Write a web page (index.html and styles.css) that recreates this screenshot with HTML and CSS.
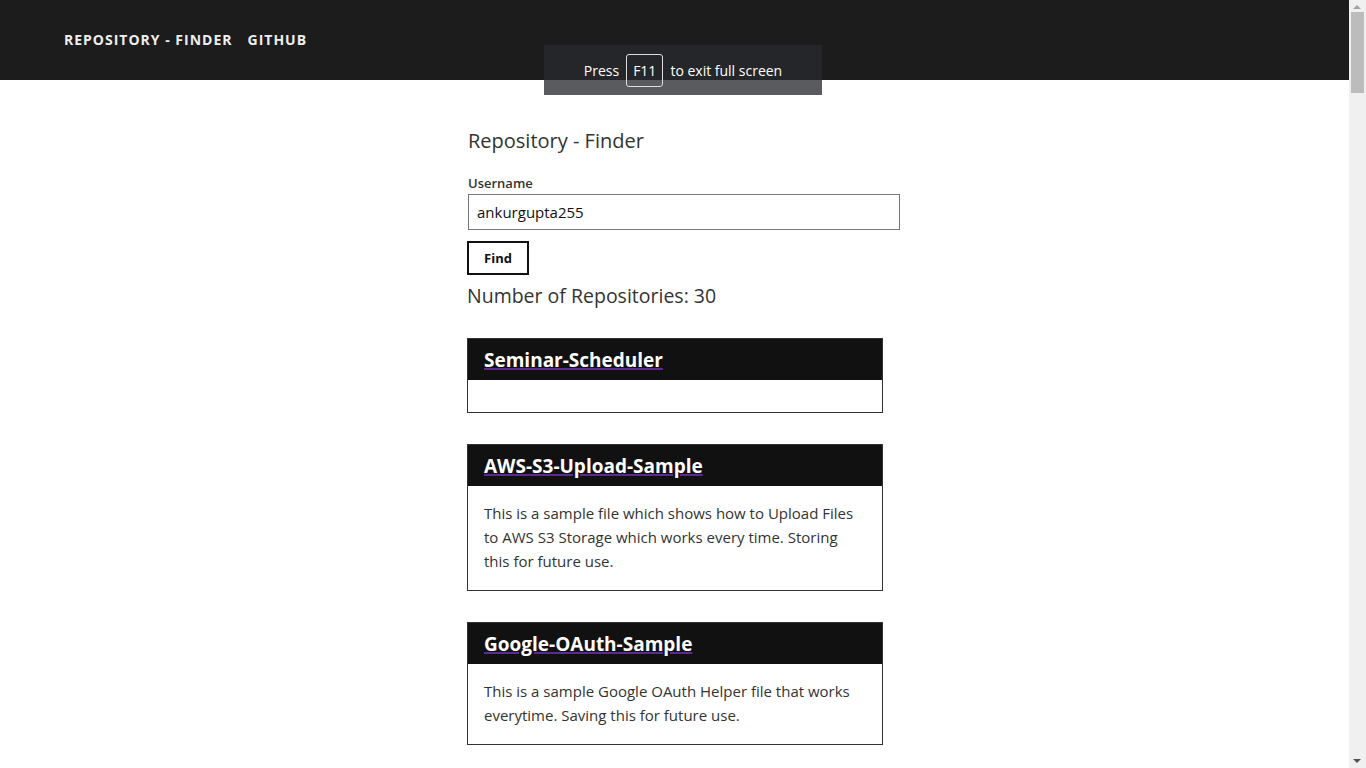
FILE: index.html
```html
<!DOCTYPE html>
<html lang="en">
<head>
  <meta charset="UTF-8" />
  <meta name="viewport" content="width=device-width, initial-scale=1.0"/>
  <title>Repository - Finder</title>
  <link rel="stylesheet" href="styles.css">
</head>
<body>

<nav class="topbar">
  <a href="#" class="brand">Repository - Finder</a>
  <a href="#" class="nav-link">Github</a>
</nav>

<div class="fs-notice">Press <span class="key">F11</span> to exit full screen</div>

<div class="scrollbar">
  <span class="arrow up"></span>
  <span class="thumb"></span>
  <span class="arrow down"></span>
</div>

<div class="main">
  <h2 class="title">Repository - Finder</h2>

  <label for="username">Username</label>
  <input type="text" id="username" value="ankurgupta255">

  <button class="find-btn">Find</button>

  <h3 class="count">Number of Repositories: 30</h3>

  <div class="repo">
    <div class="repo-head"><a href="#">Seminar-Scheduler</a></div>
    <div class="repo-body"></div>
  </div>

  <div class="repo">
    <div class="repo-head"><a href="#">AWS-S3-Upload-Sample</a></div>
    <div class="repo-body">This is a sample file which shows how to Upload Files to AWS S3 Storage which works every time. Storing this for future use.</div>
  </div>

  <div class="repo">
    <div class="repo-head"><a href="#">Google-OAuth-Sample</a></div>
    <div class="repo-body">This is a sample Google OAuth Helper file that works everytime. Saving this for future use.</div>
  </div>
</div>

</body>
</html>
```

FILE: styles.css
```css
body {
  margin: 0;
  padding-right: 17px;
  font-family: "Open Sans", "Noto Sans", sans-serif;
  color: #333;
  background: #fff;
}
.topbar {
  height: 80px;
  background: #1c1c1c;
  display: flex;
  align-items: center;
  padding-left: 64px;
  padding-bottom: 1px;
  box-sizing: border-box;
  gap: 15px;
}
.topbar a {
  color: #eee;
  text-decoration: none;
  text-transform: uppercase;
  font-weight: bold;
  font-size: 14px;
  letter-spacing: 1px;
}
.fs-notice {
  position: absolute;
  top: 45px;
  left: 544px;
  width: 278px;
  height: 50px;
  background: rgba(40, 42, 47, 0.77);
  color: #fff;
  font-size: 14px;
  display: flex;
  align-items: center;
  justify-content: center;
  gap: 7px;
}
.key {
  border: 1px solid #ddd;
  border-radius: 3px;
  padding: 6px 6px;
}
.scrollbar {
  position: fixed;
  top: 0;
  right: 0;
  width: 17px;
  height: 100%;
  background: #f0f0f0;
}
.thumb {
  position: absolute;
  top: 12px;
  left: 2px;
  width: 13px;
  height: 81px;
  background: #bcbcbc;
}
.arrow {
  position: absolute;
  left: 4px;
  border-left: 4px solid transparent;
  border-right: 4px solid transparent;
}
.arrow.up {
  top: 5px;
  border-bottom: 4px solid #a3a3a3;
}
.arrow.down {
  bottom: 5px;
  border-top: 4px solid #505050;
}
.main {
  width: 433px;
  margin-left: 467px;
  padding-top: 47px;
  padding-bottom: 40px;
}
.title {
  font-size: 20px;
  font-weight: normal;
  margin: 0 0 20px 1px;
}
label {
  display: block;
  font-size: 13px;
  font-weight: 600;
  margin-left: 1px;
}
input {
  display: block;
  width: 432px;
  height: 36px;
  box-sizing: border-box;
  margin: 2px 0 11px 1px;
  border: 1px solid #777;
  padding: 0 8px;
  font: 15px "Open Sans", sans-serif;
  color: #111;
}
.find-btn {
  width: 62px;
  height: 34px;
  background: #fff;
  border: 2px solid #111;
  font: bold 13px "Open Sans", sans-serif;
  color: #111;
}
.count {
  font-size: 19.5px;
  font-weight: normal;
  margin: 7px 0 29px;
}
.repo {
  width: 416px;
  box-sizing: border-box;
  border: 1px solid #333;
  margin-bottom: 31px;
}
.repo-head {
  background: #111;
  padding: 9px 16px 6px;
  line-height: 25px;
}
.repo-head a {
  color: #fff;
  font-size: 19px;
  font-weight: bold;
  text-decoration: underline;
  text-decoration-color: #5b2a92;
  text-decoration-thickness: 2px;
}
.repo-body {
  padding: 15px 16px 17px;
  font-size: 15px;
  line-height: 24px;
}
```
